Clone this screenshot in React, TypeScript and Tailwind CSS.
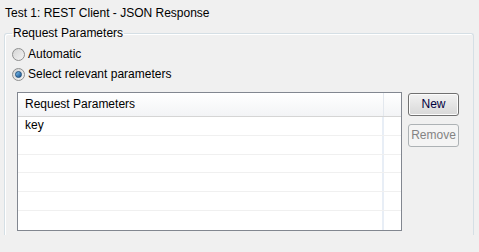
import React from "react";

const rows = ["key", "", "", "", "", ""];

function Radio({ checked, label }: { checked?: boolean; label: string }) {
    return (
        <div className="flex items-center h-[20px]">
            <span className="w-[13px] h-[13px] rounded-full border border-[#8e8f8f] bg-gradient-to-br from-[#d4d4d4] to-[#f4f4f4] flex items-center justify-center">
                {checked && (
                    <span className="w-[7px] h-[7px] rounded-full bg-gradient-to-br from-[#7fc4f3] to-[#14508c] border border-[#1d4e7c]" />
                )}
            </span>
            <span className="ml-[3px]">{label}</span>
        </div>
    );
}

export default function App() {
    return (
        <div
            className="w-[479px] h-[252px] bg-[#f0f0f0] text-[12px] leading-[15px] text-black overflow-hidden"
            style={{ fontFamily: '"Segoe UI", "Liberation Sans", Arial, sans-serif' }}
        >
            <div className="pt-[6px] pl-[5px]">Test 1: REST Client - JSON Response</div>

            <fieldset className="ml-[4px] mt-[5px] w-[470px] h-[209px] border border-b-0 border-[#d5dfe5] rounded-t-[3px] shadow-[inset_1px_1px_0_#ffffff] px-[7px]">
                <legend className="px-[1px]">Request Parameters</legend>

                <div className="mt-[3px]">
                    <Radio label="Automatic" />
                    <Radio checked label="Select relevant parameters" />
                </div>

                <div className="flex mt-[8px] ml-[5px]">
                    {/* table */}
                    <div className="w-[385px] h-[139px] border border-[#828790] bg-white flex flex-col">
                        <div className="h-[24px] flex border-b border-[#d5d5d5] bg-gradient-to-b from-white to-[#f3f4f6]">
                            <div className="w-[365px] pl-[7px] flex items-center">Request Parameters</div>
                            <div className="w-[1px] bg-[#e3e8ee]" />
                        </div>
                        {rows.map((r, i) => (
                            <div key={i} className="h-[19px] flex border-b border-[#f0f0f0] last:border-b-0">
                                <div className="w-[364px] pl-[7px] flex items-center">{r}</div>
                                <div className="w-[2px] bg-[#e8eef6]" />
                            </div>
                        ))}
                    </div>

                    {/* buttons */}
                    <div className="flex flex-col ml-[6px] mt-[1px] gap-[8px]">
                        <button className="w-[51px] h-[23px] rounded-[3px] border border-[#707070] bg-gradient-to-b from-[#f2f2f2] to-[#d8d8d8] text-[#000040] shadow-[inset_0_0_0_1px_#fcfcfc]">
                            New
                        </button>
                        <button className="w-[51px] h-[23px] rounded-[3px] border border-[#adb2b5] bg-[#f4f4f4] text-[#838383]" disabled>
                            Remove
                        </button>
                    </div>
                </div>
            </fieldset>
        </div>
    );
}
